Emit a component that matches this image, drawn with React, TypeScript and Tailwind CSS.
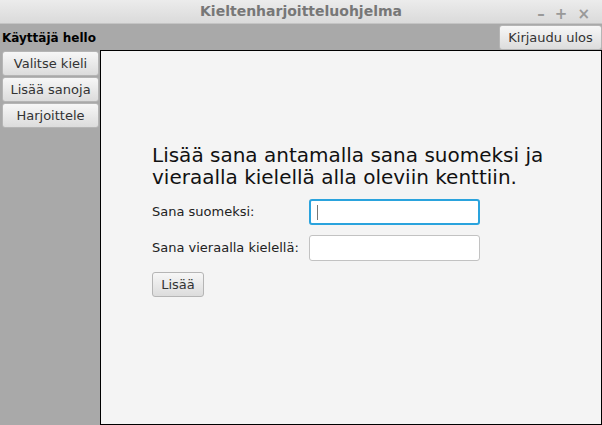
import React from "react";

const font = { fontFamily: '"DejaVu Sans", "Noto Sans", sans-serif' };

function NavButton({ label }: { label: string }) {
  return (
    <button className="h-[25px] w-[97px] rounded-[3px] border border-[#b5b5b5] bg-gradient-to-b from-[#f7f7f7] to-[#dcdcdc] text-[13px] text-[#333]">
      {label}
    </button>
  );
}

export default function App() {
  return (
    <div className="flex h-[425px] w-[602px] flex-col overflow-hidden bg-[#a9a9a9]" style={font}>
      <div className="relative flex h-[24px] shrink-0 items-center justify-center border-b border-[#c4c4c4] bg-gradient-to-b from-[#ececec] to-[#dadada]">
        <span className="text-[14px] font-bold text-[#777]">Kieltenharjoitteluohjelma</span>
        <div className="absolute right-[12px] top-[3px] flex gap-[10px] text-[15px] font-bold text-[#999]">
          <span>–</span>
          <span>+</span>
          <span>×</span>
        </div>
      </div>
      <div className="flex h-[26px] shrink-0 items-start justify-between">
        <span className="pl-[2px] pt-[5px] text-[12px] font-bold text-black">Käyttäjä hello</span>
        <button className="mt-[1px] h-[25px] w-[103px] rounded-[3px] border border-[#b5b5b5] bg-gradient-to-b from-[#f7f7f7] to-[#dcdcdc] text-[13px] text-[#333]">
          Kirjaudu ulos
        </button>
      </div>
      <div className="flex flex-1">
        <div className="flex w-[100px] shrink-0 flex-col gap-[1px] pl-[2px] pt-[1px]">
          <NavButton label="Valitse kieli" />
          <NavButton label="Lisää sanoja" />
          <NavButton label="Harjoittele" />
        </div>
        <div className="flex-1 border border-black bg-[#f4f4f4] pl-[51px] pt-[93px]">
          <h1 className="text-[20px] leading-[22px] text-[#111]">
            Lisää sana antamalla sana suomeksi ja
            <br />
            vieraalla kielellä alla oleviin kenttiin.
          </h1>
          <div className="mt-[11px] flex items-center">
            <span className="w-[157px] text-[13px] text-[#222]">Sana suomeksi:</span>
            <div className="flex h-[26px] w-[171px] items-center rounded-[3px] border-2 border-[#2aa3dd] bg-white pl-[6px]">
              <div className="h-[15px] w-[1px] bg-[#777]" />
            </div>
          </div>
          <div className="mt-[10px] flex items-center">
            <span className="w-[157px] text-[13px] text-[#222]">Sana vieraalla kielellä:</span>
            <div className="h-[26px] w-[171px] rounded-[3px] border border-[#c2c2c2] bg-white" />
          </div>
          <button className="mt-[11px] h-[25px] w-[52px] rounded-[3px] border border-[#b5b5b5] bg-gradient-to-b from-[#f7f7f7] to-[#dcdcdc] text-[13px] text-[#333]">
            Lisää
          </button>
        </div>
      </div>
    </div>
  );
}
